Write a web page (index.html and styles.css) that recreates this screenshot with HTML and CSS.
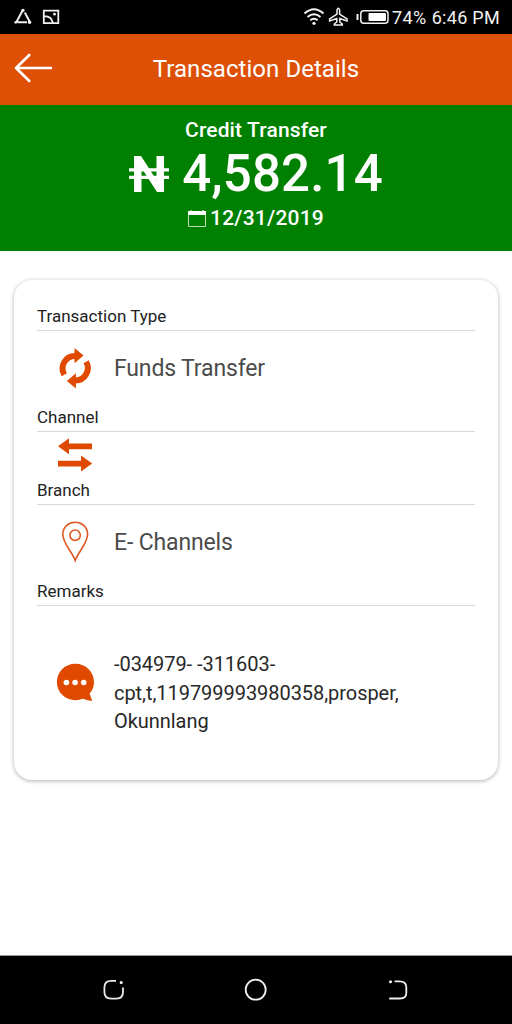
FILE: index.html
```html
<!DOCTYPE html>
<html lang="en">
<head>
<meta charset="utf-8">
<title>Transaction Details</title>
<link rel="stylesheet" href="styles.css">
</head>
<body>
<div class="screen">
  <div class="status">
    <svg class="status-left" width="62" height="34" viewBox="0 0 62 34" fill="none" stroke="#f0f0f0" stroke-width="1.8">
      <path d="M16.5 22 22.8 10M24.8 12.5 30 22.3M17.5 22.3H27" stroke-width="2"/>
      <g fill="#f0f0f0" stroke="none"><circle cx="23" cy="10.3" r="1.6"/><circle cx="29.6" cy="22.2" r="1.7"/><circle cx="15.8" cy="22.3" r="1.4"/></g>
      <path d="M43.8 10.7H58.3V23.2H43.8ZM44 16.2C49 16 52 19 53 23"/>
      <circle cx="54.5" cy="14.2" r="1.4" fill="#f0f0f0" stroke="none"/>
    </svg>
    <svg width="88" height="34" viewBox="302 0 88 34" fill="none" stroke="#f2f2f2">
      <path d="M304.5 13.5Q314 5 323.5 13.5M307.5 17Q314 11.5 320.5 17M310.3 20.3Q314 17.3 317.7 20.3" stroke-width="2"/>
      <circle cx="314" cy="23.3" r="1.6" fill="#f2f2f2" stroke="none"/>
      <path d="M337 14V10Q338.3 6.5 339.6 10V14L347 19V21L339.8 18.5V22L342.3 24V25H334.3V24L336.8 22V18.5L329.6 21V19Z" stroke-width="1.5"/>
      <path d="M357.5 14V20" stroke-width="2"/>
      <rect x="360.8" y="10.8" width="27.2" height="12.4" rx="3" stroke-width="1.5"/>
      <rect x="368.5" y="13" width="17.5" height="8" rx="1" fill="#fff" stroke="none"/>
    </svg>
    <span class="battery">74%</span><span class="clock">6:46 PM</span>
  </div>
  <header class="bar">
    <svg class="back" width="40" height="32" viewBox="0 0 40 32" fill="none" stroke="#fff" stroke-width="2.6" stroke-linecap="round" stroke-linejoin="round"><path d="M37 15H2M15.3 2 2 15 15.3 28"/></svg>
    <h1 class="title">Transaction Details</h1>
  </header>
  <section class="summary">
    <div class="kind">Credit Transfer</div>
    <div class="amount"><svg class="naira" width="40" height="38" viewBox="0 0 40 38"><path fill="#fff" d="M5 1H12L27.5 25V1H35V37H28L12.5 13V37H5Z"/><path d="M0 14.8H40M0 22.3H40" stroke="#fff" stroke-width="3.2"/></svg><span class="figure">4,582.14</span></div>
    <div class="date"><svg width="18" height="17" viewBox="0 0 18 17"><path d="M.5 4V16.5H17.5V4" fill="none" stroke="#b9dcb9"/><path d="M0 1H2L3 0 4 1H14L15 0 16 1H18V5H0Z" fill="#fff"/></svg><span class="day">12/31/2019</span></div>
  </section>
  <main class="content">
    <div class="card">
      <h2 class="label l1">Transaction Type</h2>
      <div class="row">
        <svg class="icon" width="40" height="42" viewBox="55 347 40 42">
          <g id="half"><path d="M64.3 374.7A12.4 12.4 0 0 1 75.5 356" fill="none" stroke="#e04a00" stroke-width="6"/><path d="M74.5 348 83.5 355.5 74.5 363.2Z" fill="#e04a00"/></g>
          <use href="#half" transform="rotate(180 75.2 368.2)"/>
        </svg>
        <span class="value v1">Funds Transfer</span>
      </div>
      <h2 class="label l2">Channel</h2>
      <div class="row short">
        <svg class="icon" width="40" height="36" viewBox="55 437 40 36" fill="#e04a00"><path d="M58 446.3 69 438.3V443.5H92V449.2H69V454.3ZM92.2 463.5 81 455.5V460.7H58V466.4H81V471.5Z"/></svg>
      </div>
      <h2 class="label l3">Branch</h2>
      <div class="row">
        <svg class="icon" width="40" height="42" viewBox="55 520.5 40 42" fill="none" stroke="#dc5a22" stroke-width="1.6"><path d="M75.2 560C72 551 62.8 543 62.8 533.8C62.8 517.8 87.6 517.8 87.6 533.8C87.6 543 78.4 551 75.2 560Z"/><circle cx="75.1" cy="534.7" r="5.2"/></svg>
        <span class="value v2">E- Channels</span>
      </div>
      <h2 class="label l4">Remarks</h2>
      <div class="row remarks">
        <svg class="icon" width="40" height="40" viewBox="55 662 40 40"><path fill="#e04a00" d="M75.3 663.8C85.8 663.8 94 672 94 682C94 687 92.3 690.5 89.6 693.5L92.2 701C88 700.8 84.7 699.5 82.8 698.8C70 703.5 56.9 695.3 56.9 682C56.9 672 65 663.8 75.3 663.8Z"/><g fill="#fff"><circle cx="66.4" cy="682.5" r="2.8"/><circle cx="75.1" cy="682.5" r="2.8"/><circle cx="83.7" cy="682.5" r="2.8"/></g></svg>
        <p class="note"><span class="n1">-034979- -311603-</span><br><span class="n2">cpt,t,119799993980358,prosper,</span><br><span class="n3">Okunnlang</span></p>
      </div>
    </div>
  </main>
  <nav class="nav">
    <svg width="24" height="24" viewBox="0 0 24 24" fill="none" stroke="#e8e8e8" stroke-width="1.8"><path d="M14 2.8H9Q2.4 2.8 2.4 9.5V14Q2.4 20.6 9 20.6H14.5Q21 20.6 21 14V9.5"/><circle cx="19.2" cy="4.5" r="1.5" fill="#fff" stroke="none"/></svg>
    <svg width="24" height="24" viewBox="0 0 24 24" fill="none" stroke="#f0f0f0" stroke-width="1.8"><circle cx="11.7" cy="11.7" r="10"/></svg>
    <svg width="24" height="24" viewBox="0 0 24 24" fill="none" stroke="#f0f0f0" stroke-width="1.8"><path d="M8.5 3.3H13.5Q20.3 3.3 20.3 9V15Q20.3 20.5 14 20.5H3.2"/><circle cx="4.5" cy="3.8" r="1.5" fill="#fff" stroke="none"/></svg>
  </nav>
</div>
</body>
</html>
```
FILE: styles.css
```css
* { box-sizing: border-box; }
body { margin: 0; background: #fff; font-family: Roboto, "Liberation Sans", sans-serif; }
svg { display: block; flex: none; }
h1, h2, p { margin: 0; font-weight: 400; }
.screen { width: 512px; height: 1024px; display: flex; flex-direction: column; overflow: hidden; }
.status { height: 34px; background: #000; color: #f2f2f2; display: flex; align-items: center; font-size: 18px; white-space: nowrap; padding-right: 12px; }
.status-left { margin-right: auto; }
.battery { margin-left: 2px; letter-spacing: .4px; }
.clock { margin-left: 5px; letter-spacing: .3px; }
.bar { height: 71px; background: #dd5006; color: #fff; display: grid; grid-template-columns: 54px 1fr 54px; align-items: center; padding-bottom: 2px; }
.back { margin-left: 14px; }
.title { font-size: 24px; text-align: center; white-space: nowrap; letter-spacing: .05px; }
.summary { height: 146px; background: #008000; color: #fff; display: flex; flex-direction: column; align-items: center; font-weight: 500; padding-top: 12px; white-space: nowrap; }
.kind { font-size: 21px; line-height: 27px; letter-spacing: .13px; }
.amount { display: flex; align-items: center; gap: 13px; height: 60px; font-size: 51px; line-height: 60px; letter-spacing: .15px; }
.date { display: flex; align-items: center; gap: 4px; font-size: 21px; line-height: 28px; letter-spacing: .2px; }
.content { flex: 1; padding: 29px 14px 0; border-bottom: 1px solid #8f9b9b; }
.card { height: 500px; border-radius: 18px; background: #fff; padding: 24px 23px 0; box-shadow: 0 1px 4px rgba(0,0,0,.32); }
.label { height: 27px; line-height: 24px; font-size: 17px; color: #222; border-bottom: 1px solid #d8d8d8; }
.row { display: flex; align-items: center; height: 74px; padding-left: 18px; gap: 19px; }
.row.short { height: 46px; }
.row.remarks { height: 174px; }
.remarks .icon { margin-bottom: 22px; }
.value { font-size: 23px; color: #4b4b4b; white-space: nowrap; letter-spacing: -.14px; }
.note { font-size: 20px; line-height: 28.5px; color: #282828; white-space: nowrap; letter-spacing: -.05px; }
.nav { height: 68px; background: #000; display: flex; justify-content: space-between; align-items: center; padding: 0 102px; }
```
